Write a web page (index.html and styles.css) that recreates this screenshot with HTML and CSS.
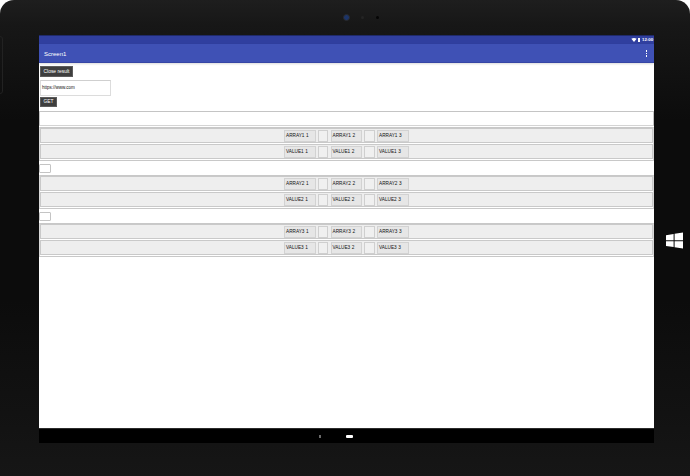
FILE: index.html
```html
<!DOCTYPE html>
<html lang="en">
<head>
<meta charset="utf-8">
<title>Screen1</title>
<link rel="stylesheet" href="styles.css">
</head>
<body>
<div class="tablet">
  <div class="side-key"></div>
  <div class="camera">
    <span class="lens"></span><span class="dot dim"></span><span class="dot"></span>
  </div>
  <div class="middle">
    <main class="screen">
      <div class="status">
        <svg class="wifi" width="6" height="4" viewBox="0 0 8 6"><path d="M0 1.2Q4-1 8 1.2L4 6z" fill="#fff"/></svg>
        <span class="battery"></span>
        <span class="clock">12:00</span>
      </div>
      <header class="appbar">
        <span class="title">Screen1</span>
        <span class="menu"><i></i><i></i><i></i></span>
      </header>
      <div class="content">
        <button class="dark close">Close result</button>
        <div class="url">https://www.com</div>
        <button class="dark get">GET</button>
        <div class="empty"></div>
        <section class="table">
          <div class="row"><span class="cell">ARRAY1 1</span><span class="spacer"></span><span class="cell">ARRAY1 2</span><span class="spacer"></span><span class="cell">ARRAY1 3</span></div>
          <div class="row"><span class="cell">VALUE1 1</span><span class="spacer"></span><span class="cell">VALUE1 2</span><span class="spacer"></span><span class="cell">VALUE1 3</span></div>
        </section>
        <div class="small"></div>
        <section class="table">
          <div class="row"><span class="cell">ARRAY2 1</span><span class="spacer"></span><span class="cell">ARRAY2 2</span><span class="spacer"></span><span class="cell">ARRAY2 3</span></div>
          <div class="row"><span class="cell">VALUE2 1</span><span class="spacer"></span><span class="cell">VALUE2 2</span><span class="spacer"></span><span class="cell">VALUE2 3</span></div>
        </section>
        <div class="small"></div>
        <section class="table">
          <div class="row"><span class="cell">ARRAY3 1</span><span class="spacer"></span><span class="cell">ARRAY3 2</span><span class="spacer"></span><span class="cell">ARRAY3 3</span></div>
          <div class="row"><span class="cell">VALUE3 1</span><span class="spacer"></span><span class="cell">VALUE3 2</span><span class="spacer"></span><span class="cell">VALUE3 3</span></div>
        </section>
      </div>
      <footer class="nav">
        <span class="back"></span>
        <span class="home"></span>
      </footer>
    </main>
    <div class="win-rail">
      <svg class="win" width="17" height="17" viewBox="0 0 17 17"><path d="M0 3.2 7.6 2v6.2H0zM8.6 1.8 17 .5v7.7H8.6zM0 9.2h7.6v5.9L0 14zM8.6 9.2H17v7.3l-8.4-1.2z" fill="#fff"/></svg>
    </div>
  </div>
</div>
</body>
</html>
```
FILE: styles.css
```css
* { box-sizing: border-box; }
html, body { margin: 0; padding: 0; background: #fff; }
body { width: 690px; height: 476px; overflow: hidden; font-family: "Liberation Sans", Arial, sans-serif; }
.tablet {
  position: relative;
  width: 690px; height: 476px;
  background: linear-gradient(180deg, #1e1e1e 0, #171717 25px, #0c0c0c 120px, #0c0c0c 300px, #131313 430px, #161616 476px);
  border-radius: 14px 14px 0 0;
  display: flex; flex-direction: column;
  overflow: hidden;
}
.side-key {
  position: absolute; left: -3px; top: 36px;
  width: 6px; height: 58px;
  border: 1px solid #222; border-radius: 3px;
}
.camera { height: 35px; display: flex; align-items: center; padding: 0 0 0 343px; }
.lens { width: 7px; height: 7px; border-radius: 50%; background: #1c3468; border: 1px solid #2a2a2a; }
.dot { width: 3px; height: 3px; border-radius: 50%; background: #050505; margin-left: 12px; }
.dot.dim { background: #242424; margin-left: 11px; }
.middle { display: flex; height: 408px; padding-left: 39px; }
.screen { width: 615px; height: 408px; background: #fff; display: flex; flex-direction: column; }
.status {
  height: 9px; background: #303f9f; color: #fff;
  display: flex; align-items: center; justify-content: flex-end; gap: 1px;
  border-top: 1px solid #1f2a6a;
}
.wifi { display: block; }
.battery { width: 2px; height: 4px; background: #fff; margin-right: 1px; }
.clock { font-size: 4.4px; line-height: 8px; width: 12px; font-weight: 700; white-space: nowrap; }
.appbar {
  height: 19px; background: #3f51b5; color: #fff;
  display: flex; align-items: center; justify-content: space-between;
  padding: 2px 7px 0 5px;
  border-bottom: 1px solid #3646a5;
  box-shadow: 0 1px 2px rgba(0,0,0,.15);
}
.title { font-size: 6px; line-height: 10px; }
.menu { display: flex; flex-direction: column; gap: 1px; margin-top: -1px; }
.menu i { display: block; width: 1.5px; height: 1.5px; background: #fff; }
.content { flex: 1; padding-top: 3px; display: flex; flex-direction: column; align-items: flex-start; }
.dark {
  display: block; padding: 0; margin: 0 0 0 1px;
  background: #3e3e3e; color: #fff;
  border: 1px solid #5c5c5c; border-radius: 0;
  font: 4.9px/8px "Liberation Sans", Arial, sans-serif;
  white-space: nowrap;
}
.close { width: 33px; height: 11px; }
.get { width: 17px; height: 10px; margin-top: 1px; }
.url {
  width: 71px; height: 16px; margin: 3px 0 0 1px; padding-left: 1px;
  border: 1px solid #dcdcdc; border-top-color: #cfcfcf;
  font-size: 4.5px; line-height: 14px; color: #111; background: #fff;
}
.empty { width: 615px; height: 15px; margin-top: 4px; background: #fff; border: 1px solid #c4c4c4; border-bottom-color: #d4d4d4; }
.empty + .table { margin-top: 1px; }
.table { width: 615px; padding: 0 0 1px; background: #fff; border-top: 1px solid #c8c8c8; border-bottom: 1px solid #c8c8c8; border-left: 1px solid #d8d8d8; border-right: 1px solid #d8d8d8; display: flex; flex-direction: column; gap: 1px; }
.row {
  height: 15px; background: #eeeeee;
  border: 1px solid #c9c9c9;
  display: flex; align-items: center; padding-left: 243px; gap: 2.25px;
}
.cell {
  width: 31.5px; height: 12px; padding-left: 1px; background: #e6e6e6; border: 1px solid #d2d2d2;
  font-size: 4.7px; line-height: 10px; word-spacing: .4px; color: #111; white-space: nowrap;
}
.spacer { width: 10.5px; height: 12px; background: #f0f0f0; border: 1px solid #cfcfcf; }
.small { width: 12px; height: 9px; margin: 3px 0 2px; background: #fff; border: 1px solid #c4c4c4; border-radius: 1px; }
.nav {
  height: 15px; background: #000; border-top: 1px solid #2b2b2b;
  display: flex; align-items: center; padding-left: 280px; gap: 25px;
}
.back { width: 2px; height: 3px; background: #6a6a6a; }
.home { width: 7px; height: 3px; background: #fff; border-radius: 1px; }
.win-rail { flex: 1; padding: 197px 0 0 12px; }
.win { display: block; }
```
